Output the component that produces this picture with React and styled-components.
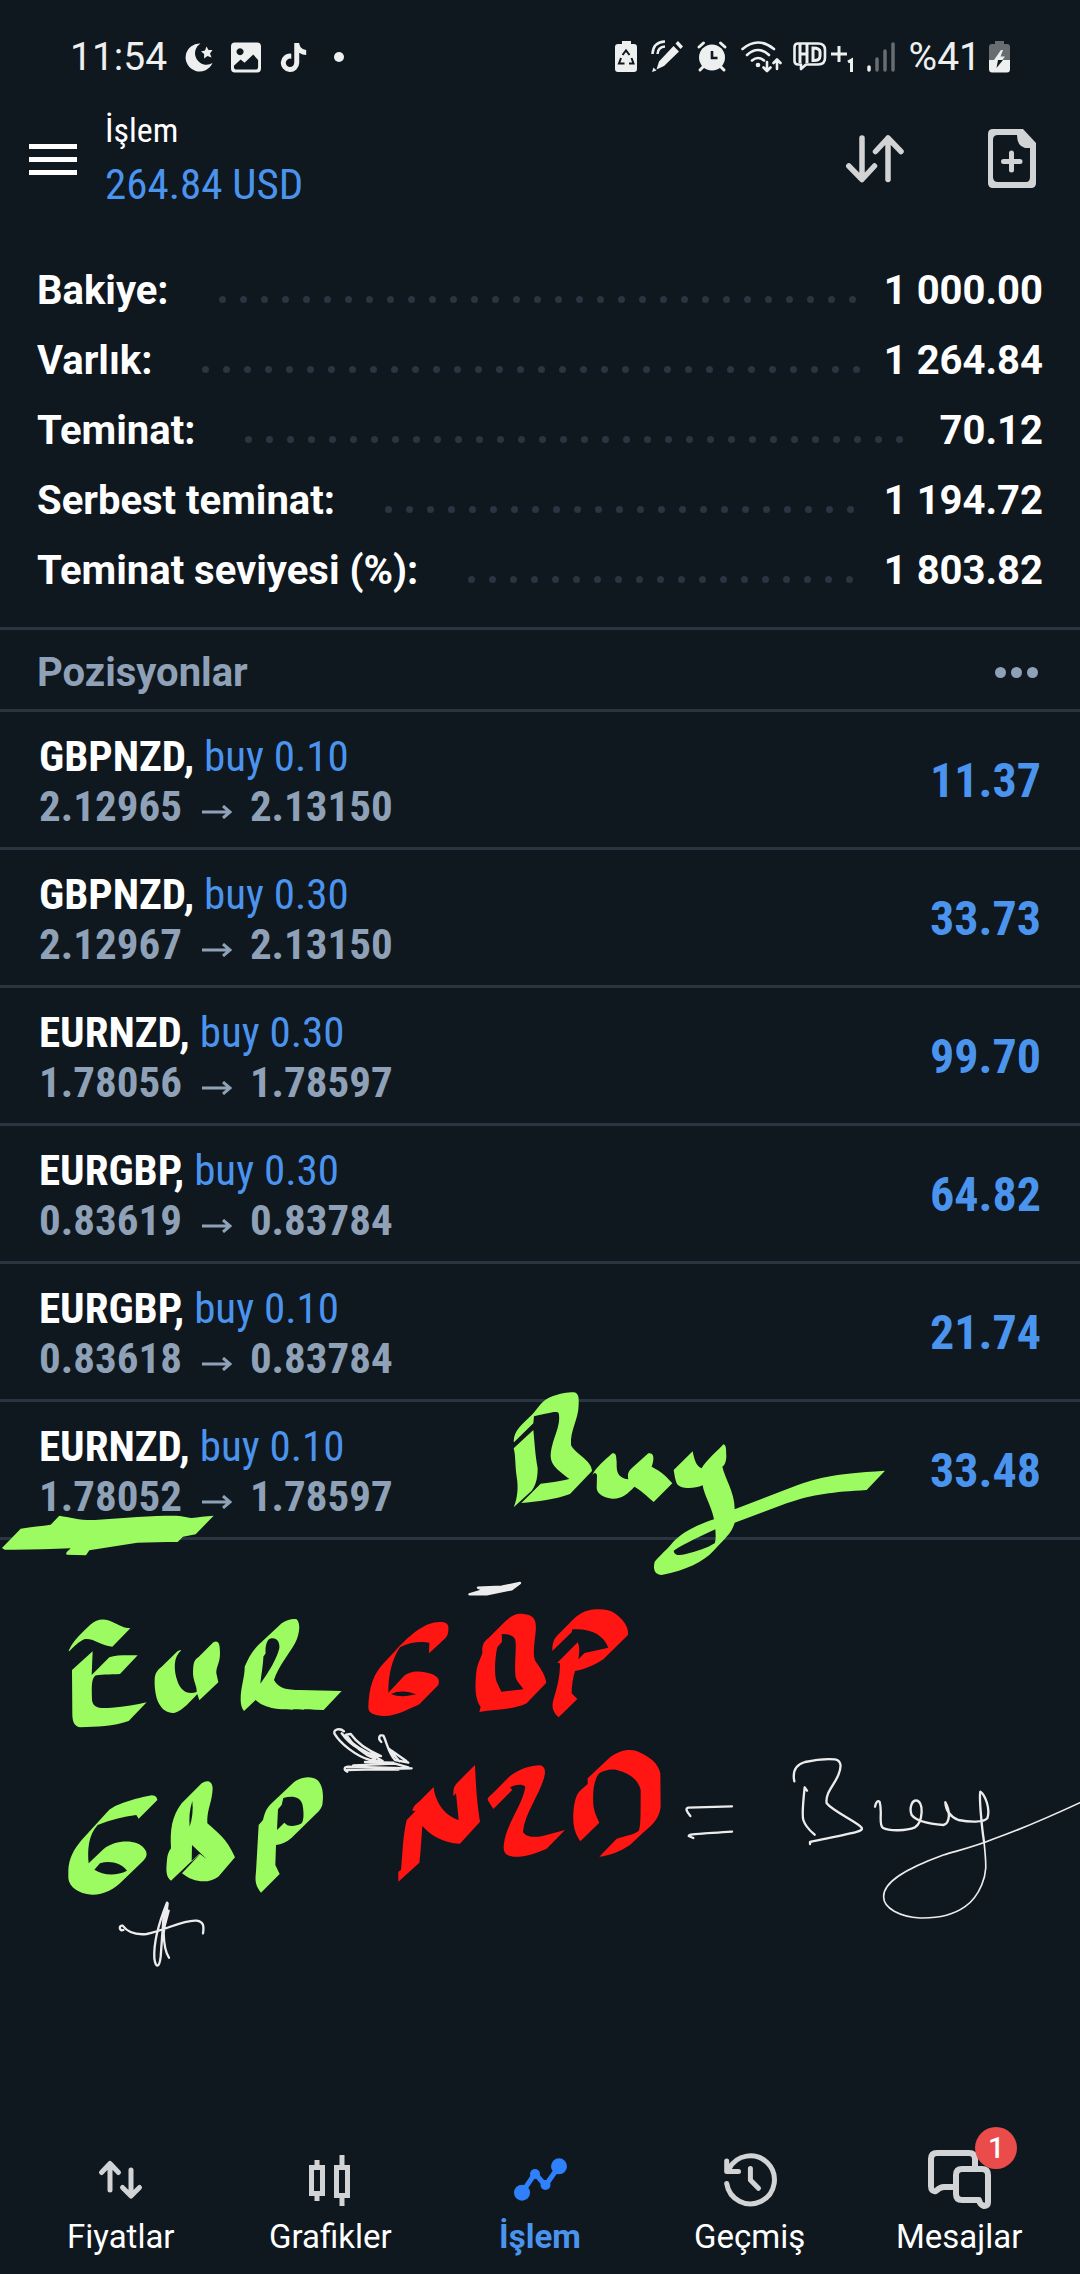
import React from "react";
import styled, { createGlobalStyle } from "styled-components";
import { FaTiktok } from "react-icons/fa6";

const color = {
  bg: "#0f171f",
  line: "#2a3541",
  text: "#ffffff",
  status: "#eef0ef",
  icon: "#d2d3d4",
  muted: "#8fa1b6",
  blue: "#4b94ee",
  active: "#2f80fb",
  badge: "#e94c4b",
  inkGreen: "#9dfb62",
  inkRed: "#ff1613",
  inkWhite: "#ececec",
};

const condensed = `"Roboto Condensed", "Liberation Sans Narrow", Roboto, sans-serif`;

const GlobalStyle = createGlobalStyle`
  * { box-sizing: border-box; }
  body {
    margin: 0;
    background: ${color.bg};
    color: ${color.text};
    font-family: Roboto, "Noto Sans", sans-serif;
  }
  button { font: inherit; color: inherit; background: none; border: 0; padding: 0; cursor: pointer; }
  h1, h2, p, ul, dl, dd, dt { margin: 0; padding: 0; }
  ul { list-style: none; }
`;

const Screen = styled.div`
  position: relative;
  display: flex;
  flex-direction: column;
  min-height: 100vh;
`;

const StatusBar = styled.div`
  display: flex;
  justify-content: space-between;
  align-items: center;
  height: 114px;
  padding: 0 70px;
  color: ${color.status};
  font-size: 39px;
  line-height: 40px;
`;

const StatusGroup = styled.div`
  display: flex;
  align-items: center;
  gap: ${(p) => p.$gap}px;
`;

const Glyph = styled.svg`
  display: block;
  flex: none;
  overflow: visible;
`;

const TopBar = styled.header`
  display: flex;
  align-items: center;
  height: 138px;
  padding: 0 44px 48px 29px;
`;

const MenuButton = styled.button`
  display: flex;
  flex-direction: column;
  gap: 8px;
  width: 48px;
  margin-right: 28px;
`;

const MenuBar = styled.span`
  height: 5px;
  background: ${color.text};
`;

const Heading = styled.div`
  flex: 1;
  font-family: ${condensed};
`;

const Title = styled.h1`
  font-size: 34px;
  font-weight: 400;
  line-height: 50px;
`;

const Profit = styled.p`
  color: ${color.blue};
  font-size: 43px;
  line-height: 58px;
`;

const Actions = styled.div`
  display: flex;
  align-items: center;
  gap: 84px;
`;

const Summary = styled.dl`
  padding: 3px 37px 22px;
  font-size: 40px;
  font-weight: 700;
`;

const SummaryRow = styled.div`
  display: flex;
  align-items: center;
  height: 70px;
`;

const Leader = styled.span`
  flex: 1;
  display: flex;
  flex-wrap: wrap;
  gap: 14px;
  height: 7px;
  margin: 18px 22px 0 50px;
  overflow: hidden;
`;

const LeaderDot = styled.i`
  width: 7px;
  height: 7px;
  border-radius: 50%;
  background: ${color.line};
`;

const SectionHeader = styled.div`
  display: flex;
  align-items: center;
  justify-content: space-between;
  height: 85px;
  padding: 6px 42px 0 37px;
  border-top: 3px solid ${color.line};
  border-bottom: 3px solid ${color.line};
  color: ${color.muted};
`;

const SectionTitle = styled.h2`
  font-size: 40px;
  font-weight: 700;
`;

const MoreButton = styled.button`
  display: flex;
  gap: 5px;
`;

const MoreDot = styled.span`
  width: 11px;
  height: 11px;
  border-radius: 50%;
  background: ${color.muted};
`;

const Position = styled.li`
  display: flex;
  align-items: center;
  justify-content: space-between;
  height: 138px;
  padding: 2px 39px 0;
  border-bottom: 3px solid ${color.line};
  font-family: ${condensed};
  font-size: 43px;
  line-height: 50px;
`;

const Symbol = styled.strong`
  font-weight: 700;
`;

const Side = styled.span`
  color: ${color.blue};
`;

const Prices = styled.p`
  display: flex;
  color: ${color.muted};
  font-weight: 700;
`;

const PriceArrow = styled.svg`
  width: 30px;
  height: 14px;
  margin: 24px 18px 0 20px;
`;

const Gain = styled.span`
  color: ${color.blue};
  font-size: 48px;
  font-weight: 700;
`;

const Ink = styled.svg`
  position: absolute;
  top: 1370px;
  left: 0;
  width: 100%;
  pointer-events: none;
`;

const TabBar = styled.nav`
  display: flex;
  margin-top: auto;
  padding: 0 16px 17px;
`;

const Tab = styled.a`
  flex: 1;
  display: flex;
  flex-direction: column;
  align-items: center;
  gap: 5px;
  color: ${(p) => (p.$active ? color.blue : color.text)};
  font-size: 33px;
  font-weight: ${(p) => (p.$active ? 700 : 400)};
  line-height: 40px;
  text-decoration: none;
`;

const TabIcon = styled.span`
  position: relative;
  color: ${(p) => (p.$active ? color.active : color.icon)};
`;

const Badge = styled.span`
  position: absolute;
  top: -21px;
  left: 48px;
  width: 42px;
  height: 42px;
  border-radius: 50%;
  background: ${color.badge};
  color: ${color.text};
  font-size: 29px;
  font-weight: 500;
  line-height: 42px;
  text-align: center;
`;

const summary = [
  ["Bakiye:", "1 000.00"],
  ["Varlık:", "1 264.84"],
  ["Teminat:", "70.12"],
  ["Serbest teminat:", "1 194.72"],
  ["Teminat seviyesi (%):", "1 803.82"],
];

const positions = [
  ["GBPNZD", "buy 0.10", "2.12965", "2.13150", "11.37"],
  ["GBPNZD", "buy 0.30", "2.12967", "2.13150", "33.73"],
  ["EURNZD", "buy 0.30", "1.78056", "1.78597", "99.70"],
  ["EURGBP", "buy 0.30", "0.83619", "0.83784", "64.82"],
  ["EURGBP", "buy 0.10", "0.83618", "0.83784", "21.74"],
  ["EURNZD", "buy 0.10", "1.78052", "1.78597", "33.48"],
];

const stroke = { fill: "none", stroke: "currentColor", strokeLinecap: "round", strokeLinejoin: "round" };

const tabs = [
  {
    label: "Fiyatlar",
    icon: (
      <g {...stroke} strokeWidth="5">
        <path d="M21 42V16M12.500 24.500L21 15.500L29.500 24.500M42 22V47M33.500 39.500L42 48L50.500 39.500" />
      </g>
    ),
  },
  {
    label: "Grafikler",
    icon: (
      <g fill="none" stroke="currentColor" strokeWidth="5">
        <path d="M19 12V18M19 48V53M44 7V18M44 50V58" />
        <path d="M13.500 19.500H24.500V45.500H13.500ZM38.500 19.500H49.500V47.500H38.500Z" />
      </g>
    ),
  },
  {
    label: "İşlem",
    active: true,
    icon: (
      <>
        <path {...stroke} strokeWidth="5" d="M14 44.700L27 25.500L37.500 37.500L51 18.300" />
        <g fill="currentColor">
          <circle cx="14" cy="44.700" r="8" />
          <circle cx="27" cy="26" r="5" />
          <circle cx="37.500" cy="37" r="5" />
          <circle cx="51" cy="18.300" r="8" />
        </g>
      </>
    ),
  },
  {
    label: "Geçmiş",
    icon: (
      <g {...stroke} strokeWidth="5">
        <path d="M8.700 35.500A24 24 0 1 0 11 21" />
        <path d="M8.700 13V23.500H20.500M32.400 20.500V32L40.500 40.300" />
      </g>
    ),
  },
  {
    label: "Mesajlar",
    badge: "1",
    icon: (
      <g {...stroke} strokeWidth="6">
        <path d="M48 18V11Q48 5 42 5H10Q4 5 4 11V38Q4 44 9 43Q13 39 17 39H26" />
        <path d="M35 21H55Q61 21 61 27V54Q61 58 57 58Q53 57 52 52H35Q29 52 29 46V27Q29 21 35 21Z" />
      </g>
    ),
  },
];

function StatusLeft() {
  return (
    <StatusGroup $gap={18}>
      <span>11:54</span>
      <Glyph width="28" height="38" viewBox="0 0 28 38" fill="currentColor">
        <path d="M15.500 5.500A14 14 0 1 0 27.500 25A11 11 0 0 1 15.500 5.500Z" />
        <path d="M21.500 8.500L23.500 12L27.500 12L25 15.500L26.500 19.500L22.500 18L19 20.500L19.200 16L16 13.500L20 12.500Z" />
      </Glyph>
      <Glyph width="30" height="38" viewBox="0 0 31 38" fill="currentColor">
        <path
          fillRule="evenodd"
          d="M4 4H27Q31 4 31 8V31Q31 35 27 35H4Q0 35 0 31V8Q0 4 4 4ZM9.300 10A3.600 3.600 0 1 0 9.400 10ZM3 28L10 21.500L14 25L23 16.500L28 22V29Q28 32 25 32H6Q3 32 3 29Z"
        />
      </Glyph>
      <FaTiktok size={29} />
      <Glyph width="28" height="38" viewBox="0 0 28 38" fill="currentColor">
        <circle cx="13" cy="19" r="5" />
      </Glyph>
    </StatusGroup>
  );
}

function StatusRight() {
  return (
    <StatusGroup $gap={14}>
      <Glyph width="22" height="38" viewBox="0 0 22 38" fill="currentColor">
        <path d="M7 3H16V6H19Q22 6 22 9V31Q22 34 19 34H3Q0 34 0 31V9Q0 6 3 6H7Z" />
        <path
          d="M7.500 17L11 12.500L14.500 17M16.500 20L18.500 25.500H14M9.500 25.500H4L6 20"
          fill="none"
          stroke={color.bg}
          strokeWidth="2"
        />
      </Glyph>
      <Glyph width="32" height="38" viewBox="0 0 32 38" fill="currentColor">
        <path d="M22.500 8L28 13.500L13 28L5.500 31.500L8 23.500ZM24.500 5.500L27 3L32 8.500L29.500 11ZM1 34L2.500 29.500L5.500 32.500Z" />
        <path {...stroke} strokeWidth="2.500" strokeLinecap="butt" d="M1.500 16Q2 4 14 3.500M6.500 16Q7 9 14 8.500" />
      </Glyph>
      <Glyph width="30" height="38" viewBox="0 0 30 38">
        <circle cx="15" cy="19.500" r="13" fill="currentColor" />
        <path {...stroke} strokeWidth="3" d="M2 9L6.500 5M28 9L23.500 5M3 32L6 29M27 32L24 29" />
        <path d="M15 13V20H20.500" fill="none" stroke={color.bg} strokeWidth="2.600" />
      </Glyph>
      <Glyph width="38" height="38" viewBox="0 0 38 38">
        <path
          {...stroke}
          strokeWidth="2.600"
          d="M1.500 11Q17 -2 33 11M6 17Q17 7 28 17M11 22.500Q17 17.500 23 22.500M26 24V32.500M22.500 29.500L26 33L29.500 29.500M36 31V22M32.500 25L36 21.500L39.500 25"
        />
        <circle cx="17" cy="27" r="2.300" fill="currentColor" />
      </Glyph>
      <Glyph width="60" height="38" viewBox="0 0 60 38">
        <path
          {...stroke}
          strokeWidth="2.600"
          d="M5 5.500H25Q32 5.500 32 12V20Q32 26.500 25 26.500H13L8 31V26.500H5Q1.500 26.500 1.500 23V9Q1.500 5.500 5 5.500Z"
        />
        <path
          {...stroke}
          strokeWidth="3"
          strokeLinecap="butt"
          strokeLinejoin="miter"
          d="M7 6V25M14 6V25M7 16H14M20 10V22.500Q27 23 27 18V14Q27 10 20 10ZM46 8V24M38 16H54M55 24L58.500 22V34"
        />
      </Glyph>
      <Glyph width="28" height="38" viewBox="0 0 28 38" {...stroke} strokeWidth="3.500">
        <path d="M2 29V32" />
        <path opacity="0.4" d="M10 21V32M18 13V32M26 6V32" />
      </Glyph>
      <StatusGroup $gap={8}>
        <span>%41</span>
        <Glyph width="21" height="38" viewBox="0 0 21 38" fill="currentColor">
          <path opacity="0.4" d="M6 3H15V6H18Q21 6 21 9V22H0V9Q0 6 3 6H6Z" />
          <path d="M0 22H21V31Q21 34.500 18 34.500H3Q0 34.500 0 31Z" />
          <path d="M12 12L5 22H9L8 29L16 18.500H11.500L14 12Z" />
          <path d="M9 22L7.500 30L14 22Z" fill={color.bg} />
        </Glyph>
      </StatusGroup>
    </StatusGroup>
  );
}

function Annotations() {
  return (
    <Ink viewBox="0 1370 1080 620" aria-hidden="true" fillRule="evenodd" strokeLinecap="round" strokeLinejoin="round">
      <g fill={color.inkGreen}>
        <g transform="translate(480 1370) scale(.333333)">
          <path d="M101 215C102 180 125 165 155 135C175 115 185 92 210 82C235 71 265 67 280 67C297 68 297 85 296 105C295 150 270 180 273 225C283 250 335 270 336 303L270 372C230 388 170 395 124 399L182 341C215 338 240 333 268 327C245 308 213 290 212 260C213 210 245 170 236 130C232 122 215 127 162 139L160 160L102 217Z" />
          <path d="M101 235L160 180C165 230 165 250 173 295C173 330 165 350 155 362L101 412C112 385 116 355 110 320C105 285 107 255 101 235Z" />
          <path d="M338 316C340 300 380 265 397 250C410 248 408 260 410 275C410 300 409 322 445 328C442 312 445 305 455 295L505 250C522 247 524 265 515 290C545 305 560 320 577 340L521 396C500 378 480 358 463 350C445 370 425 387 398 386C370 384 352 372 350 355L351 315C345 305 340 310 338 316Z" />
          <path d="M581 300L638 244C642 265 648 290 665 295C675 275 715 240 730 223C740 225 738 240 739 260C738 275 735 285 727 290C735 325 765 370 764 418L920 358C1010 322 1050 313 1215 302L1160 360C1060 366 1000 372 920 400L764 458C755 490 735 505 700 543C670 575 620 600 545 615C525 614 518 600 524 575C540 555 560 540 580 515C610 485 650 465 702 448C695 410 672 375 668 346C640 358 600 358 590 340C584 325 584 315 581 300ZM706 478C670 495 610 522 581 542C582 555 595 558 615 553C650 545 680 535 704 520C708 510 707 495 706 478Z" />
        </g>
        <g transform="translate(0 1480) scale(.333333)">
          <path d="M6 204L62 146C95 140 125 138 152 134L178 107C210 112 245 122 285 120C370 113 460 107 520 107C545 107 560 112 575 114C595 112 615 108 641 107L587 163L549 170L533 186C490 186 450 187 412 188L268 211L258 226L200 224C195 218 205 212 212 205C150 207 80 210 14 209Z" />
          <path d="M206 512C220 480 250 455 270 435C295 412 320 415 345 430C360 437 372 444 391 445L337 500C300 497 285 475 255 477C235 485 222 500 208 514Z" />
          <path d="M216 570L278 514L275 585L328 532C350 524 385 526 413 526L360 582C330 584 295 583 285 587C272 600 276 630 276 660C280 690 310 684 335 683C375 680 410 675 440 667L386 723C340 740 290 740 240 742C222 738 218 725 217 705Z" />
          <path d="M464 600C464 580 472 570 485 560L530 516C535 511 540 511 544 511C520 530 520 570 533 605C542 630 560 645 590 636C592 620 578 600 579 575C580 550 582 540 595 532L640 487C655 480 660 490 660 520C660 550 648 560 649 580L655 607L598 661L592 642C570 665 550 690 525 698C500 703 480 685 470 655C465 635 463 615 464 600Z" />
          <path d="M722 660C722 620 735 590 734 560C745 535 755 515 775 495L845 430C865 417 880 415 890 418C902 430 900 460 885 490C865 525 835 560 822 600C835 625 860 630 900 630L1025 633L971 690C900 688 850 692 815 684C790 677 778 670 767 660L732 693C725 685 722 672 722 660ZM781 611C785 575 790 550 790 530L797 520C795 500 800 480 810 476C830 470 840 485 838 505C830 535 815 560 801 582Z" />
        </g>
        <g transform="translate(0 1720) scale(.333333)">
          <path d="M205 450C207 415 220 390 245 360L325 272C350 250 420 232 455 226C468 226 472 235 472 240L416 296L409 285C370 290 330 300 293 315C265 345 262 390 266 430L310 388C350 355 415 360 432 385C445 400 440 412 430 422L370 480C340 510 310 525 275 524C235 522 207 500 205 475ZM283 449L300 430C330 420 365 430 381 452C350 468 310 467 283 449Z" />
          <path d="M513 482C497 470 498 450 501 420C503 400 508 392 513 385C510 330 515 290 545 250L605 190C622 178 637 183 638 205C637 245 620 270 622 310C650 335 680 355 705 412L655 470C625 492 580 488 546 460L600 403L598 401ZM577 243C568 270 567 295 569 320C577 295 580 270 577 243ZM576 375L575 425L600 402L620 417Z" />
          <path d="M783 518C765 495 765 480 768 455L776 315L789 300C795 275 800 265 815 250L880 188C905 168 940 167 955 183C970 200 970 230 968 245C968 260 960 270 950 280L875 353C860 366 845 373 828 375L826 435L839 462ZM850 234C880 226 900 232 907 252C912 275 912 300 905 310C890 318 875 320 862 316L853 308L831 330L834 268L845 255Z" />
        </g>
      </g>
      <g transform="translate(320 1560) scale(.333333)">
        <g fill={color.inkRed}>
          <path d="M145 440C147 380 160 340 195 305L230 268C265 230 310 190 350 187C375 184 388 190 385 210C385 230 375 235 360 250L327 280L328 248C300 243 265 248 240 262C215 300 205 345 205 398L250 350C270 330 305 332 335 342C355 350 360 360 355 375L298 433C265 448 225 470 190 468C165 466 143 460 145 440ZM213 402C235 390 265 393 288 403C260 410 235 411 213 402Z" />
          <path d="M478 456L482 440C465 420 465 380 468 345C470 315 480 300 487 280C485 255 492 245 505 235L550 190C575 165 590 160 610 162C650 165 650 190 646 225C640 270 640 290 646 303C665 330 675 345 679 368L620 430C580 450 530 447 478 456ZM545 222L546 245L532 262C525 290 522 345 530 365L544 395L610 388C600 370 588 365 586 345C583 300 590 265 586 240C580 225 565 222 545 222Z" />
          <path d="M697 273C697 245 702 235 720 218L760 178C785 155 805 148 835 148C870 147 885 157 905 178C922 197 925 210 924 225L850 298C825 315 795 328 765 333C758 355 755 380 755 400L772 417L716 472C697 455 695 440 700 420C712 380 720 350 720 310L712 308L773 247C780 260 778 280 775 298L794 279L865 263C850 225 815 205 757 208L755 217Z" />
          <path d="M235 965L235 935L243 930C248 880 248 830 260 780L287 752L277 753C280 738 285 735 300 722L341 681C345 730 380 770 416 780L408 700L400 708C400 685 402 678 412 668L465 615C468 680 470 720 480 785L420 851C370 850 330 825 307 798C304 840 302 880 298 908Z" />
          <path d="M503 720C503 710 510 708 520 698L570 648C600 625 640 615 660 616C675 620 678 630 672 655C655 710 615 760 609 815C615 830 640 833 665 829L735 810L680 866C650 880 610 892 580 890C555 887 548 875 552 850C560 790 610 730 616 680C605 670 585 675 570 682L577 690L520 747Z" />
          <path d="M781 844C765 820 758 800 760 760C763 720 770 700 785 688L803 672L803 655L870 592C895 572 925 565 950 573C990 590 1015 610 1021 640L1022 740C1018 780 990 800 965 822L930 855C900 875 870 887 838 890L890 836C915 828 940 825 956 813C962 800 962 775 962 690C955 660 930 640 890 630C870 626 850 633 838 640C820 660 818 700 820 735C822 755 832 775 838 788Z" />
        </g>
        <g fill="none" stroke={color.inkWhite} strokeWidth="7">
          <path fill={color.inkWhite} d="M448 103L490 90L474 83L545 80L600 69L575 88L500 103Z" />
          <path d="M72 514C60 503 40 508 43 520C60 550 110 590 150 600L188 603C150 580 100 560 65 520C90 555 130 580 183 588C140 570 110 548 92 522L78 524C95 550 125 580 165 597" />
          <path d="M184 546C172 535 178 522 190 527C200 545 205 580 225 600L265 608L205 565L238 604M215 572L258 602" />
          <path d="M82 635C70 630 72 620 85 620L275 625L80 630M100 616L225 611L265 622M135 606L220 608M82 629H235" />
        </g>
      </g>
      <g fill="none" stroke={color.inkWhite}>
        <path
          transform="translate(0 1720) scale(.333333)"
          strokeWidth="7"
          d="M370 630C358 635 355 615 368 617C385 640 410 645 440 642C500 630 550 598 590 602C612 605 612 620 609 640M501 548C480 600 460 660 463 715C467 745 478 745 482 710L490 600L503 550L491 640C492 680 498 700 507 713M506 572L488 640M501 548L486 650"
        />
        <g transform="translate(660 1740) scale(.333333)">
          <path
            strokeWidth="7"
            d="M91 228C80 215 75 205 85 203L216 199M100 294L86 288C88 282 95 283 216 275M403 124C397 95 405 75 435 66C470 58 500 56 525 58C545 62 545 80 535 105C520 140 495 160 500 190C520 215 590 245 605 263C610 275 590 277 450 306L450 312M441 152L434 142C430 180 425 225 430 240C437 262 450 272 464 284M645 200C648 185 655 180 659 186C668 215 655 250 668 263C690 275 740 272 765 262C790 245 790 190 772 182C755 178 747 205 755 225C770 245 810 252 850 255C870 250 872 215 856 187C858 215 870 230 895 240C930 247 970 248 982 235C992 205 975 165 961 155C957 170 965 260 972 305"
          />
          <path strokeWidth="5" d="M972 305C980 380 980 400 965 435C950 470 930 490 915 500C880 525 830 535 780 534C720 530 670 505 671 470C670 425 740 385 850 345C900 330 950 318 1000 297C1100 262 1180 225 1260 188" />
        </g>
      </g>
    </Ink>
  );
}

export default function App() {
  return (
    <>
      <GlobalStyle />
      <Screen>
        <StatusBar>
          <StatusLeft />
          <StatusRight />
        </StatusBar>

        <TopBar>
          <MenuButton type="button" aria-label="Menü">
            <MenuBar />
            <MenuBar />
            <MenuBar />
          </MenuButton>
          <Heading>
            <Title>İşlem</Title>
            <Profit>264.84 USD</Profit>
          </Heading>
          <Actions>
            <button type="button" aria-label="Sırala">
              <Glyph width="58" height="60" viewBox="0 0 58 60" {...stroke} stroke={color.icon} strokeWidth="5.500">
                <path d="M16 9V50M2.800 37L16 50.500L28.500 37M42 50.500V9M29.500 22.500L42 9L55 22.500" />
              </Glyph>
            </button>
            <button type="button" aria-label="Yeni emir">
              <Glyph width="48" height="60" viewBox="0 0 48 60">
                <path
                  fill={color.icon}
                  fillRule="evenodd"
                  d="M5 0H35L48 14V54Q48 59 43 59H5Q0 59 0 54V5Q0 0 5 0ZM10 6Q5 6 5 11V48Q5 53 10 53H38Q42 53 42 48V19H37Q29 17 29 6Z"
                />
                <path {...stroke} stroke={color.icon} strokeWidth="5" d="M23.500 24V41M15.500 32.500H32" />
              </Glyph>
            </button>
          </Actions>
        </TopBar>

        <main>
          <Summary>
            {summary.map(([label, value]) => (
              <SummaryRow key={label}>
                <dt>{label}</dt>
                <Leader aria-hidden="true">
                  {Array.from({ length: 60 }, (_, i) => (
                    <LeaderDot key={i} />
                  ))}
                </Leader>
                <dd>{value}</dd>
              </SummaryRow>
            ))}
          </Summary>

          <SectionHeader>
            <SectionTitle>Pozisyonlar</SectionTitle>
            <MoreButton type="button" aria-label="Diğer">
              <MoreDot />
              <MoreDot />
              <MoreDot />
            </MoreButton>
          </SectionHeader>

          <ul>
            {positions.map(([symbol, side, from, to, gain], i) => (
              <Position key={i}>
                <div>
                  <p>
                    <Symbol>{symbol},</Symbol> <Side>{side}</Side>
                  </p>
                  <Prices>
                    {from}
                    <PriceArrow viewBox="0 0 30 14" fill="none" stroke="currentColor" strokeWidth="3" aria-hidden="true">
                      <path d="M0 7H27M21 1L28 7L21 13" />
                    </PriceArrow>
                    {to}
                  </Prices>
                </div>
                <Gain>{gain}</Gain>
              </Position>
            ))}
          </ul>
        </main>

        <Annotations />

        <TabBar>
          {tabs.map(({ label, icon, active, badge }) => (
            <Tab key={label} href="#" $active={active} aria-current={active ? "page" : undefined}>
              <TabIcon $active={active}>
                <Glyph width="64" height="64" viewBox="0 0 64 64">
                  {icon}
                </Glyph>
                {badge && <Badge>{badge}</Badge>}
              </TabIcon>
              {label}
            </Tab>
          ))}
        </TabBar>
      </Screen>
    </>
  );
}
